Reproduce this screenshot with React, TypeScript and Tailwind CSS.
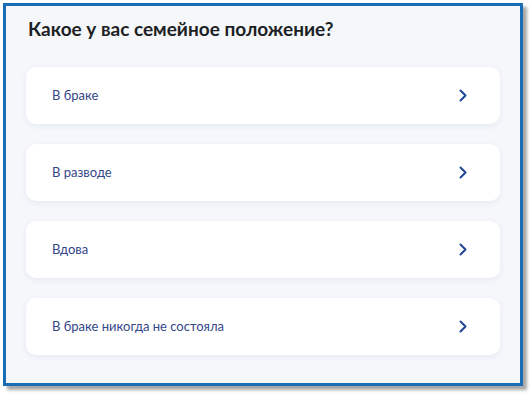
import React from 'react';

const OPTIONS = ['В браке', 'В разводе', 'Вдова', 'В браке никогда не состояла'];

const Chevron: React.FC = () => (
  <svg width="8" height="13" viewBox="0 0 8 13" fill="none" className="shrink-0">
    <path d="M1.5 1.5L6.5 6.5L1.5 11.5" stroke="#1f4595" strokeWidth="2" strokeLinecap="round" strokeLinejoin="round" />
  </svg>
);

const App: React.FC = () => {
  return (
    <div className="w-[532px] h-[395px] bg-white p-[3px]" style={{ fontFamily: 'Lato, "Noto Sans", sans-serif' }}>
      <div className="w-[520px] h-[383px] border-[3px] border-[#1a6cb3] bg-[#f5f7fb] shadow-[4px_4px_3px_rgba(0,0,0,0.35)] px-[20px]">
        {/* Question */}
        <h2 className="pt-[11px] pl-[2px] mb-[26px] text-[19px] leading-[24px] font-bold text-[#1c1f24]">
          Какое у вас семейное положение?
        </h2>

        {/* Answers */}
        <div className="flex flex-col gap-[20px]">
          {OPTIONS.map((label) => (
            <div
              key={label}
              className="h-[57px] bg-white rounded-[10px] shadow-[0_2px_6px_rgba(30,60,120,0.07)] flex items-center justify-between pl-[26px] pr-[33px]"
            >
              <span className="text-[13px] text-[#34468a]">{label}</span>
              <Chevron />
            </div>
          ))}
        </div>
      </div>
    </div>
  );
};

export default App;
